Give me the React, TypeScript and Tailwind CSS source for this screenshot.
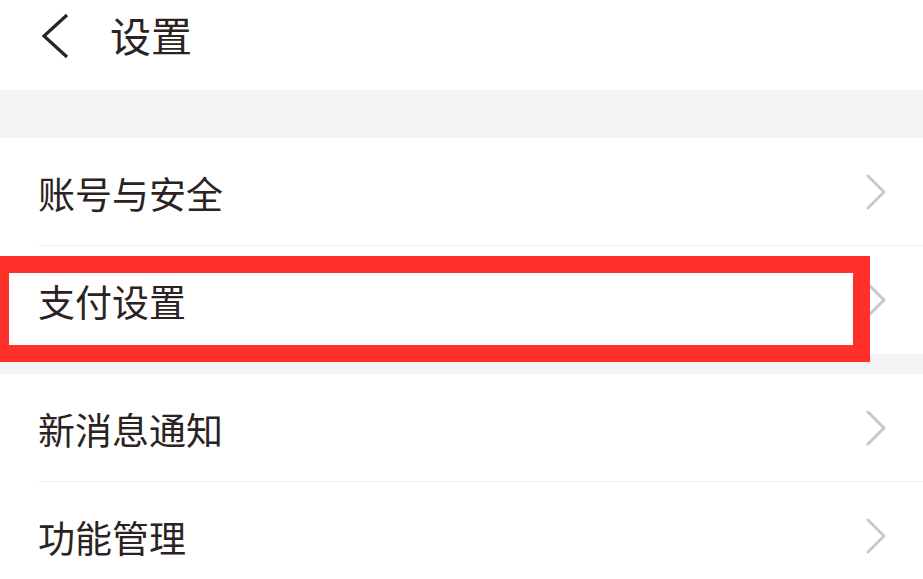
import React from 'react';

const groups = [
  ['账号与安全', '支付设置'],
  ['新消息通知', '功能管理'],
];

function Chevron() {
  return (
    <svg width="22" height="36" viewBox="0 0 22 36" className="shrink-0">
      <path d="M3 2 L19 18 L3 34" fill="none" stroke="#c8c8c8" strokeWidth="3" strokeLinecap="round" strokeLinejoin="round" />
    </svg>
  );
}

function Row({ label, last }: { label: string; last: boolean }) {
  return (
    <div className="pl-[38px] bg-white">
      <div
        className={`h-[108px] flex items-center justify-between pr-[36px] ${
          last ? '' : 'border-b border-[#ededed]'
        }`}
      >
        <span className="text-[37px] leading-none text-[#2a2322] pt-[3px]">{label}</span>
        <Chevron />
      </div>
    </div>
  );
}

export default function App() {
  return (
    <div
      className="relative w-[923px] h-[579px] overflow-hidden bg-white"
      style={{ fontFamily: '"Noto Sans CJK SC", "Noto Sans", sans-serif' }}
    >
      {/* header */}
      <div className="h-[90px] flex items-center bg-white">
        <svg width="30" height="46" viewBox="0 0 30 46" className="ml-[40px] mt-[-19px]">
          <path d="M27 2 L4 23 L27 44" fill="none" stroke="#2a2322" strokeWidth="3.2" strokeLinejoin="miter" />
        </svg>
        <span className="ml-[40px] mt-[-22px] text-[41px] leading-none text-[#2a2322]">设置</span>
      </div>

      <div className="h-[48px] bg-[#f4f2f2]" />

      {groups.map((g, gi) => (
        <div key={gi}>
          {gi > 0 && <div className="h-[20px] bg-[#f4f2f2]" />}
          {g.map((label, i) => (
            <Row key={label} label={label} last={i === g.length - 1} />
          ))}
        </div>
      ))}

      {/* highlight box */}
      <div className="absolute left-0 top-[256px] w-[870px] h-[106px] border-[17px] border-l-[9px] border-[#ff2f29]" />
    </div>
  );
}
